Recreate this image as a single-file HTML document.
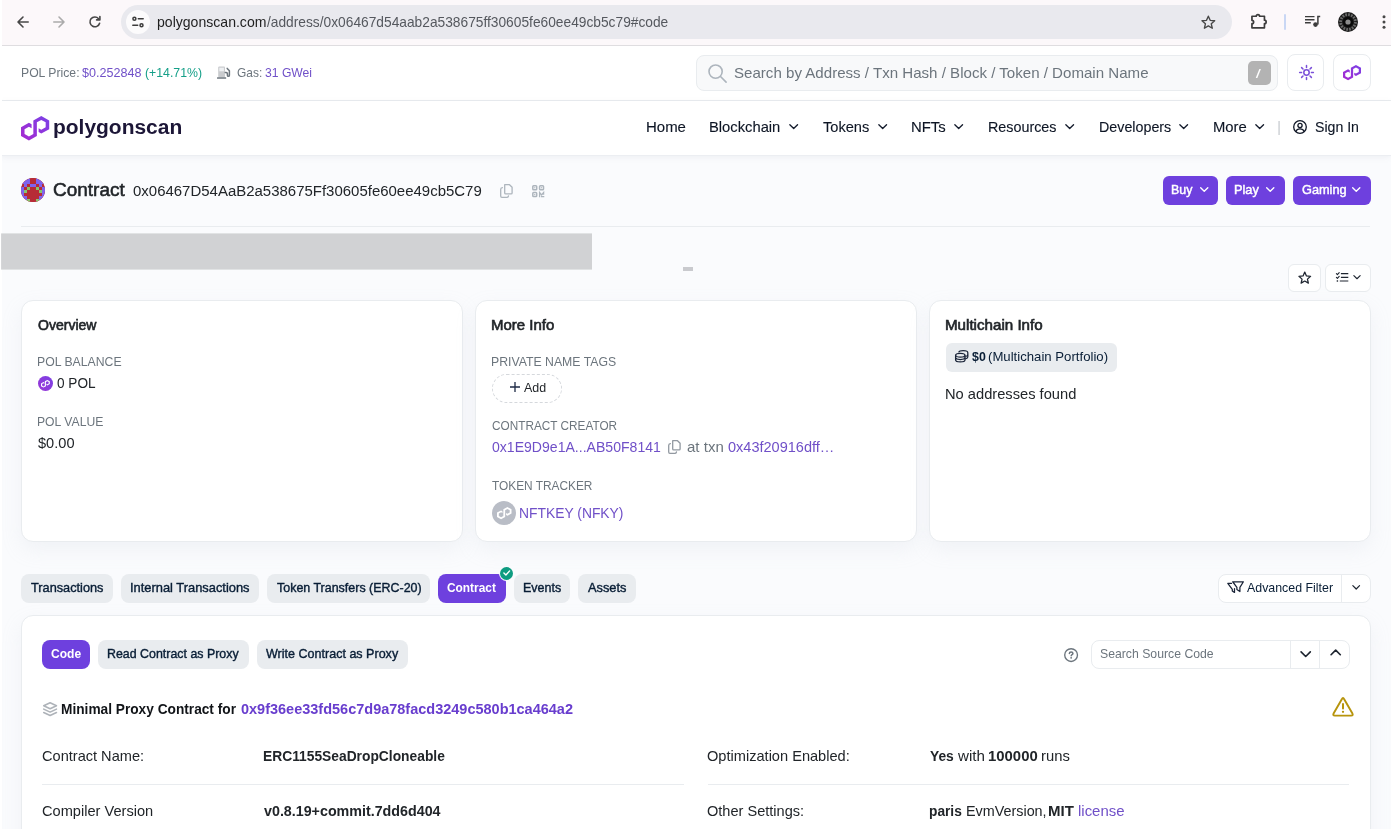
<!DOCTYPE html>
<html lang="en">
<head>
<meta charset="utf-8">
<title>ERC1155SeaDropCloneable | Address 0x06467D54AaB2a538675Ff30605fe60ee49cb5C79 | PolygonScan</title>
<style>
html,body{margin:0;padding:0;background:#fff;}
body{width:1391px;height:829px;overflow:hidden;font-family:"Liberation Sans",Arial,sans-serif;}
#root{will-change:transform;position:relative;width:1391px;height:829px;overflow:hidden;background:#fafbfd;}
.t{position:absolute;white-space:nowrap;line-height:1;transform-origin:0 0;margin:0;padding:0;}
.b{position:absolute;box-sizing:border-box;}
.card{background:#fff;border:1px solid #e9ecef;border-radius:12px;box-shadow:0 8px 20px rgba(189,197,209,.15);}
.pill{background:#e9ecef;border-radius:8px;}
.pp{background:#6e40de;border-radius:8px;}
.wb{background:#fff;border:1px solid #e9ecef;border-radius:8px;}
svg{position:absolute;overflow:visible;}
b{font-weight:700;}
</style>
</head>
<body>
<div id="root">
<!-- browser chrome -->
<div class="b" style="left:0;top:0;width:1391px;height:45px;background:#fcf8fa;"></div>
<div class="b" style="left:0;top:45px;width:1391px;height:1px;background:#dfdde0;"></div>
<div class="b" style="left:121px;top:5px;width:1111px;height:34px;border-radius:17px;background:#e9e9ee;"></div>
<div class="b" style="left:126px;top:10px;width:24px;height:24px;border-radius:12px;background:#fcfbfc;"></div>
<!-- site top bar -->
<div class="b" style="left:0;top:46px;width:1391px;height:54px;background:#fff;"></div>
<div class="b" style="left:0;top:100px;width:1391px;height:1px;background:#e9ecef;"></div>
<div class="b" style="left:696px;top:55px;width:582px;height:36px;border-radius:8px;background:#f8f9fa;border:1px solid #e9ecef;"></div>
<div class="b" style="left:1248px;top:61px;width:23px;height:24px;border-radius:5px;background:#b3b3b3;"></div>
<div class="b wb" style="left:1287px;top:54px;width:37px;height:37px;"></div>
<div class="b wb" style="left:1333px;top:54px;width:38px;height:37px;"></div>
<!-- navbar -->
<div class="b" style="left:0;top:101px;width:1391px;height:54px;background:#fff;box-shadow:0 2px 6px rgba(140,152,164,.12);"></div>
<div class="b" style="left:0;top:155px;width:1391px;height:1px;background:#eceef2;"></div>
<!-- title row -->
<div class="b" style="left:21px;top:178px;width:24px;height:24px;border-radius:12px;background:#a93040;overflow:hidden;"></div>
<div class="b pp" style="left:1163px;top:176px;width:55px;height:29px;border-radius:6px;"></div>
<div class="b pp" style="left:1226px;top:176px;width:59px;height:29px;border-radius:6px;"></div>
<div class="b pp" style="left:1293px;top:176px;width:78px;height:29px;border-radius:6px;"></div>
<div class="b" style="left:21px;top:226px;width:1349px;height:1px;background:#e9ecef;"></div>
<!-- gray ad placeholder -->
<div class="b" style="left:683.4px;top:267.4px;width:10px;height:3.3px;background:#c9cace;"></div>
<div class="b wb" style="left:1287.5px;top:264px;width:33px;height:28px;border-radius:6px;"></div>
<div class="b wb" style="left:1325px;top:264px;width:46px;height:28px;border-radius:6px;"></div>
<!-- cards -->
<div class="b card" style="left:21px;top:300px;width:442px;height:242px;"></div>
<div class="b card" style="left:475px;top:300px;width:442px;height:242px;"></div>
<div class="b card" style="left:929px;top:300px;width:442px;height:242px;"></div>
<div class="b" style="left:37.9px;top:376.2px;width:15px;height:15px;border-radius:8px;background:linear-gradient(45deg,#9a36d6,#7b41e4);"></div>
<div class="b" style="left:492px;top:374px;width:70px;height:28.5px;border-radius:15px;border:1px dashed #d5d8dc;"></div>
<div class="b" style="left:492px;top:501px;width:24px;height:24px;border-radius:12px;background:#b9bdc6;"></div>
<div class="b" style="left:946px;top:343px;width:171px;height:28.5px;border-radius:6px;background:#e9ecef;"></div>
<!-- tabs -->
<div class="b pill" style="left:21px;top:574px;width:91.5px;height:28.5px;"></div>
<div class="b pill" style="left:121px;top:574px;width:137.5px;height:28.5px;"></div>
<div class="b pill" style="left:267px;top:574px;width:163px;height:28.5px;"></div>
<div class="b pp" style="left:438px;top:574px;width:68px;height:28.5px;"></div>
<div class="b pill" style="left:514px;top:574px;width:55.5px;height:28.5px;"></div>
<div class="b pill" style="left:578px;top:574px;width:57.5px;height:28.5px;"></div>
<div class="b" style="left:499.5px;top:566.5px;width:13.5px;height:13.5px;border-radius:7px;background:#0e9c81;box-shadow:0 0 0 1px #fafbfd;"></div>
<div class="b wb" style="left:1218px;top:574px;width:152.5px;height:28.5px;"></div>
<div class="b" style="left:1341px;top:574px;width:1px;height:28.5px;background:#e9ecef;"></div>
<!-- code card -->
<div class="b card" style="left:21px;top:615px;width:1350px;height:300px;"></div>
<div class="b pp" style="left:42px;top:640px;width:48px;height:28.5px;"></div>
<div class="b pill" style="left:98px;top:640px;width:151px;height:28.5px;"></div>
<div class="b pill" style="left:257px;top:640px;width:151px;height:28.5px;"></div>
<div class="b wb" style="left:1091px;top:640px;width:258.5px;height:28.5px;"></div>
<div class="b" style="left:1290px;top:640px;width:1px;height:28.5px;background:#e9ecef;"></div>
<div class="b" style="left:1319px;top:640px;width:1px;height:28.5px;background:#e9ecef;"></div>
<div class="b" style="left:42px;top:784px;width:642px;height:1px;background:#e9ecef;"></div>
<div class="b" style="left:708px;top:784px;width:641px;height:1px;background:#e9ecef;"></div>
<!-- left window edge -->
<div class="b" style="left:0;top:0;width:2px;height:829px;background:#fff;"></div>
<svg style="left:0;top:230px" width="600" height="44" viewBox="0 0 600 44"><rect x="1.1" y="3.4" width="590.9" height="36.2" fill="#d1d2d4"/></svg>
<!-- ===== icons ===== -->
<svg width="0" height="0" style="left:0;top:0"><defs>
<linearGradient id="pg" x1="0" y1="1" x2="1" y2="0"><stop offset="0" stop-color="#a729d0"/><stop offset="1" stop-color="#7a41e6"/></linearGradient>
<clipPath id="bc"><circle cx="12" cy="12" r="12"/></clipPath>
</defs></svg>
<!-- chrome: back / forward / reload -->
<svg style="left:17px;top:16px" width="12" height="12" viewBox="0 0 12 12" fill="none" stroke="#474747" stroke-width="1.6" stroke-linecap="round" stroke-linejoin="round"><path d="M11.2 6H1.2M6 1L1 6l5 5"/></svg>
<svg style="left:53px;top:16px" width="12" height="12" viewBox="0 0 12 12" fill="none" stroke="#ababab" stroke-width="1.6" stroke-linecap="round" stroke-linejoin="round"><path d="M.8 6h10M6 1l5 5-5 5"/></svg>
<svg style="left:89px;top:16px" width="12" height="12" viewBox="0 0 12 12" fill="none" stroke="#474747" stroke-width="1.6" stroke-linecap="round" stroke-linejoin="round"><path d="M10.6 7.2A4.9 4.9 0 1 1 9.6 2.7"/><path d="M10.9.6v3.3H7.6" /></svg>
<!-- tune / site info icon -->
<svg style="left:132px;top:16px" width="12" height="12" viewBox="0 0 12 12" fill="none" stroke="#3c3c3c" stroke-width="1.5" stroke-linecap="round"><circle cx="2.4" cy="2.7" r="1.5"/><path d="M6.3 2.7h4.9"/><circle cx="9.5" cy="9.2" r="1.5"/><path d="M.8 9.2h4.9"/></svg>
<!-- bookmark star -->
<svg style="left:1200.7px;top:14.9px" width="14.7" height="13.8" viewBox="0 0 16 15" fill="none" stroke="#474747" stroke-width="1.5" stroke-linejoin="round"><path d="M8 1.3l2 4.5 4.9.5-3.7 3.3 1.1 4.8L8 11.9l-4.3 2.5 1.1-4.8L1.100 6.3 6 5.800z"/></svg>
<!-- extension puzzle -->
<svg style="left:1250px;top:13px" width="18" height="17" viewBox="0 0 18 17" fill="none" stroke="#3c3c3c" stroke-width="1.7" stroke-linejoin="round"><path d="M1.950 3.250H6.200a1.700 1.700 0 0 1 3.400 0H14.450V7.200a1.700 1.700 0 0 1 0 3.400V14.850H1.950V10.700a1.700 1.700 0 0 0 0-3.400z"/></svg>
<div class="b" style="left:1284px;top:14px;width:2px;height:16px;background:#c9d7f4;border-radius:1px;"></div>
<!-- media control -->
<svg style="left:1305px;top:15px" width="16" height="13" viewBox="0 0 16 13" fill="none" stroke="#3c3c3c" stroke-width="1.4"><path d="M0 1.600h9.500M0 4.700h9.500M0 7.800h5.800"/><path d="M12.900 9.600V1.400h2.300" stroke-width="1.500"/><circle cx="10.500" cy="9.600" r="2.300" fill="#3c3c3c" stroke="none"/></svg>
<!-- avatar -->
<svg style="left:1338px;top:12px" width="20" height="20" viewBox="0 0 20 20"><circle cx="10" cy="10" r="10" fill="#1c1c1c"/><circle cx="10" cy="10" r="7.400" fill="none" stroke="#6a6a6a" stroke-width="2.800" stroke-dasharray="1.700 1.200"/><circle cx="10" cy="10" r="5.200" fill="#0a0a0a"/><circle cx="10" cy="10" r="2.600" fill="#8c8c8c"/></svg>
<!-- menu dots -->
<svg style="left:1382px;top:15px" width="4" height="14" viewBox="0 0 4 14" fill="#474747"><circle cx="2" cy="1.700" r="1.500"/><circle cx="2" cy="7" r="1.500"/><circle cx="2" cy="12.300" r="1.500"/></svg>
<!-- gas pump -->
<svg style="left:217px;top:65.500px" width="14" height="13" viewBox="0 0 14 13"><rect x="1.200" y=".5" width="6.800" height="10.800" rx="1" fill="#c9cbce"/><rect x="2.300" y="1.700" width="4.600" height="3.600" fill="#eef0f2"/><rect x="0" y="11.200" width="9.200" height="1.600" rx=".5" fill="#6c757d"/><path d="M8.300 6.600h.9c.8 0 1.200.5 1.200 1.200v1.400c0 .7.500 1.100 1 1.100s1-.4 1-1.100V4.700L10.200 2.400" fill="none" stroke="#6c757d" stroke-width="1.500" stroke-linecap="round" stroke-linejoin="round"/></svg>
<!-- search magnifier -->
<svg style="left:708px;top:63.500px" width="19" height="19" viewBox="0 0 19 19" fill="none" stroke="#adb5bd" stroke-width="1.600" stroke-linecap="round"><circle cx="7.600" cy="7.600" r="6.600"/><path d="M12.500 12.500l5.600 5.600"/></svg>
<!-- sun -->
<svg style="left:1298.500px;top:65px" width="15" height="15" viewBox="0 0 15 15" fill="none" stroke="#7a4fd8" stroke-width="1.500" stroke-linecap="round"><circle cx="7.500" cy="7.500" r="2.700"/><path d="M7.500.6v2M7.500 12.400v2M.6 7.500h2M12.400 7.500h2M2.600 2.600l1.400 1.400M11 11l1.400 1.400M2.600 12.400L4 11M11 4l1.400-1.400"/></svg>
<!-- polygon small (top bar) -->
<svg style="left:1343px;top:65px" width="18" height="15.300" viewBox="0 0 178 161" preserveAspectRatio="none"><path fill="url(#pg)" d="M66.800 54.700l-16.700-9.700L0 74.100v58l50.100 29 50.100-29V41.900L128 25.800l27.800 16.100v32.200L128 90.200l-16.700-9.700v25.800l16.700 9.700 50.100-29V29L128 0 77.900 29v90.200l-27.800 16.100-27.800-16.100V86.900l27.800-16.100 16.700 9.700V54.700z"/></svg>
<!-- polygon logo (navbar) -->
<svg style="left:21px;top:115.700px" width="28.200" height="24.400" viewBox="0 0 178 161" preserveAspectRatio="none"><path fill="url(#pg)" d="M66.800 54.700l-16.700-9.700L0 74.100v58l50.100 29 50.100-29V41.900L128 25.800l27.800 16.100v32.200L128 90.200l-16.700-9.700v25.800l16.700 9.700 50.100-29V29L128 0 77.900 29v90.200l-27.800 16.100-27.800-16.100V86.900l27.800-16.100 16.700 9.700V54.700z"/></svg>
<!-- nav chevrons -->
<svg style="left:788.75px;top:123.700px" width="9.400" height="5.500" viewBox="0 0 10 6" fill="none" stroke="#141c2c" stroke-width="1.450" stroke-linecap="round" stroke-linejoin="round"><path d="M.8.800L5 5 9.200.8"/></svg>
<svg style="left:878.05px;top:123.700px" width="9.400" height="5.500" viewBox="0 0 10 6" fill="none" stroke="#141c2c" stroke-width="1.450" stroke-linecap="round" stroke-linejoin="round"><path d="M.8.800L5 5 9.200.8"/></svg>
<svg style="left:954.30px;top:123.700px" width="9.400" height="5.500" viewBox="0 0 10 6" fill="none" stroke="#141c2c" stroke-width="1.450" stroke-linecap="round" stroke-linejoin="round"><path d="M.8.800L5 5 9.200.8"/></svg>
<svg style="left:1065.05px;top:123.700px" width="9.400" height="5.500" viewBox="0 0 10 6" fill="none" stroke="#141c2c" stroke-width="1.450" stroke-linecap="round" stroke-linejoin="round"><path d="M.8.800L5 5 9.200.8"/></svg>
<svg style="left:1179.00px;top:123.700px" width="9.400" height="5.500" viewBox="0 0 10 6" fill="none" stroke="#141c2c" stroke-width="1.450" stroke-linecap="round" stroke-linejoin="round"><path d="M.8.800L5 5 9.200.8"/></svg>
<svg style="left:1255.45px;top:123.700px" width="9.400" height="5.500" viewBox="0 0 10 6" fill="none" stroke="#141c2c" stroke-width="1.450" stroke-linecap="round" stroke-linejoin="round"><path d="M.8.800L5 5 9.200.8"/></svg>
<!-- user circle -->
<svg style="left:1293px;top:120px" width="14" height="14" viewBox="0 0 14 14" fill="none" stroke="#111827" stroke-width="1.300"><circle cx="7" cy="7" r="6.300"/><circle cx="7" cy="5.500" r="2.100"/><path d="M2.900 11.600c.6-1.900 2.100-2.800 4.100-2.800s3.500.9 4.100 2.800"/></svg>
<!-- blockie -->
<svg style="left:21px;top:178px" width="24" height="24" viewBox="0 0 24 24" shape-rendering="crispEdges"><g clip-path="url(#bc)">
<rect width="24" height="24" fill="#b72b36"/>
<g fill="#7f63ee"><rect x="0" y="0" width="9" height="6"/><rect x="15" y="0" width="9" height="6"/><rect x="3" y="6" width="3" height="3"/><rect x="18" y="6" width="3" height="3"/><rect x="9" y="6" width="6" height="3"/><rect x="0" y="9" width="3" height="9"/><rect x="21" y="9" width="3" height="9"/><rect x="0" y="18" width="6" height="6"/><rect x="18" y="18" width="6" height="6"/></g>
<g fill="#86c46c"><rect x="6" y="9" width="3" height="3"/><rect x="15" y="9" width="3" height="3"/><rect x="3" y="12" width="3" height="3"/><rect x="18" y="12" width="3" height="3"/><rect x="6" y="21" width="3" height="3"/><rect x="15" y="21" width="3" height="3"/></g>
</g></svg>
<!-- copy + qr (title) -->
<svg style="left:500px;top:184px" width="13" height="14" viewBox="0 0 13 14" fill="none" stroke="#adb5bd" stroke-width="1.300" stroke-linejoin="round" stroke-linecap="round"><path d="M4.700.7h4.800l2.600 2.600v5.600a1 1 0 0 1-1 1H5.700a1 1 0 0 1-1-1z"/><path d="M2.400 3.700C1.300 3.900.7 4.500.7 5.400v6.700c0 .7.500 1.200 1.200 1.200h5.200c.8 0 1.300-.5 1.400-1.400"/></svg>
<svg style="left:532px;top:184.500px" width="12.500" height="12.500" viewBox="0 0 12.500 12.500" fill="none" stroke="#adb5bd" stroke-width="1.500"><rect x=".8" y=".8" width="3.900" height="3.900" rx=".8"/><rect x="7.600" y=".8" width="3.900" height="3.900" rx=".8"/><rect x=".8" y="7.600" width="3.900" height="3.900" rx=".8"/><g fill="#adb5bd" stroke="none"><rect x="2.200" y="2.200" width="1.100" height="1.100"/><rect x="9" y="2.200" width="1.100" height="1.100"/><rect x="2.200" y="9" width="1.100" height="1.100"/></g><path d="M7.600 12.300V7.500l2 2.500 2-2.500v2.200M9 11.700h3.300" stroke-width="1.300"/></svg>
<!-- button chevrons (Buy/Play/Gaming) -->
<svg style="left:1199.800px;top:186.600px" width="8.500" height="5.200" viewBox="0 0 10 6" fill="none" stroke="#fff" stroke-width="1.600" stroke-linecap="round" stroke-linejoin="round"><path d="M.8.800L5 5 9.200.8"/></svg>
<svg style="left:1266.300px;top:186.600px" width="8.500" height="5.200" viewBox="0 0 10 6" fill="none" stroke="#fff" stroke-width="1.600" stroke-linecap="round" stroke-linejoin="round"><path d="M.8.800L5 5 9.200.8"/></svg>
<svg style="left:1351.800px;top:186.600px" width="8.500" height="5.200" viewBox="0 0 10 6" fill="none" stroke="#fff" stroke-width="1.600" stroke-linecap="round" stroke-linejoin="round"><path d="M.8.800L5 5 9.200.8"/></svg>
<!-- star + list buttons -->
<svg style="left:1297.500px;top:271px" width="13.500" height="12.700" viewBox="0 0 16 15" fill="none" stroke="#1e2530" stroke-width="1.500" stroke-linejoin="round"><path d="M8 1.300l2 4.500 4.900.5-3.700 3.300 1.100 4.800L8 11.900l-4.300 2.500 1.100-4.800L1.100 6.300 6 5.800z"/></svg>
<svg style="left:1335.500px;top:271.500px" width="12.500" height="10.500" viewBox="0 0 12.500 10.500" fill="none" stroke="#1e2530" stroke-width="1.200"><path d="M4.900 1.600h7.400M4.900 5.300h7.400M3.800 9h8.500"/><path d="M.4 1.700l1 1L3.200.7M.4 5.400l1 1 1.800-2" stroke-linecap="round" stroke-linejoin="round" stroke-width="1.100"/><rect x=".7" y="8.300" width="1.400" height="1.400" fill="#1e2530" stroke="none"/></svg>
<svg style="left:1353px;top:275.200px" width="8" height="4.500" viewBox="0 0 10 6" fill="none" stroke="#1e2530" stroke-width="1.500" stroke-linecap="round" stroke-linejoin="round"><path d="M.8.800L5 5 9.200.8"/></svg>
<!-- POL coin icon -->
<svg style="left:41px;top:380px" width="8.800" height="7.600" viewBox="0 0 178 161" preserveAspectRatio="none"><path fill="#fff" d="M66.800 54.700l-16.700-9.700L0 74.100v58l50.100 29 50.100-29V41.900L128 25.800l27.800 16.100v32.200L128 90.200l-16.700-9.700v25.800l16.700 9.700 50.100-29V29L128 0 77.900 29v90.200l-27.800 16.100-27.800-16.100V86.900l27.800-16.100 16.700 9.700V54.700z"/></svg>
<!-- plus -->
<svg style="left:509.600px;top:382px" width="10" height="10" viewBox="0 0 10 10" fill="none" stroke="#1e2a45" stroke-width="1.300"><path d="M5 0v10M0 5h10"/></svg>
<!-- copy (creator) -->
<svg style="left:668px;top:440px" width="13" height="14" viewBox="0 0 13 14" fill="none" stroke="#9299a1" stroke-width="1.300" stroke-linejoin="round" stroke-linecap="round"><path d="M4.700.7h4.800l2.600 2.600v5.600a1 1 0 0 1-1 1H5.700a1 1 0 0 1-1-1z"/><path d="M2.400 3.700C1.300 3.900.7 4.500.7 5.400v6.700c0 .7.500 1.200 1.200 1.200h5.200c.8 0 1.300-.5 1.400-1.400"/></svg>
<!-- token icon -->
<svg style="left:496.700px;top:507.200px" width="14.500" height="12.200" viewBox="0 0 178 161" preserveAspectRatio="none"><path fill="#fff" d="M66.800 54.700l-16.700-9.700L0 74.100v58l50.100 29 50.100-29V41.900L128 25.800l27.800 16.100v32.200L128 90.200l-16.700-9.700v25.800l16.700 9.700 50.100-29V29L128 0 77.900 29v90.200l-27.800 16.100-27.800-16.100V86.900l27.800-16.100 16.700 9.700V54.700z"/></svg>
<!-- coins -->
<svg style="left:955px;top:349.500px" width="13.500" height="12.500" viewBox="0 0 13.500 12.500" fill="none" stroke="#1a2438" stroke-width="1.250"><path d="M3.600 2.400C4 1.300 5.800.6 8.200.6c2.600 0 4.600.9 4.600 2.100v4.200c0 .9-1 1.600-2.500 1.900"/><path d="M12.800 4.700c0 .8-.9 1.500-2.400 1.800" /><ellipse cx="5.300" cy="5.200" rx="4.700" ry="1.900"/><path d="M.6 5.200v4.700c0 1.100 2.100 1.900 4.700 1.900s4.700-.8 4.700-1.900V5.200"/><path d="M.6 7.600c0 1.100 2.100 1.900 4.700 1.900s4.700-.8 4.700-1.900"/></svg>
<!-- verified check -->
<svg style="left:502.700px;top:570px" width="7.500" height="6" viewBox="0 0 7.500 6" fill="none" stroke="#fff" stroke-width="1.400" stroke-linecap="round" stroke-linejoin="round"><path d="M.9 3.100l2 1.900L6.600.9"/></svg>
<!-- filters icon -->
<svg style="left:1227px;top:581px" width="17" height="12" viewBox="0 0 17 12" fill="none" stroke="#1a2438" stroke-width="1.250" stroke-linejoin="round" stroke-linecap="round"><path d="M5.700.75H16.400L12.900 6.300V10.500L9.900 8.500V6.300z"/><path d="M4.500 2.400H.8L5.300 8.300V9.900L7.500 11.400V7.600"/></svg>
<svg style="left:1352px;top:585.300px" width="8.400" height="4.800" viewBox="0 0 10 6" fill="none" stroke="#1e2530" stroke-width="1.500" stroke-linecap="round" stroke-linejoin="round"><path d="M.8.800L5 5 9.200.8"/></svg>
<!-- help -->
<svg style="left:1064.400px;top:647.800px" width="14.200" height="14.200" viewBox="0 0 14 14" fill="none" stroke="#6c757d" stroke-width="1.350"><circle cx="7" cy="7" r="6.300"/><path d="M5.300 5.500c0-1 .7-1.600 1.750-1.600s1.750.6 1.750 1.450c0 1.150-1.700 1.150-1.700 2.350" stroke-linecap="round" stroke-width="1.500"/><circle cx="7.050" cy="9.700" r=".9" fill="#6c757d" stroke="none"/></svg>
<!-- search chevrons -->
<svg style="left:1299.800px;top:650.800px" width="11.400" height="6.600" viewBox="0 0 10 6" fill="none" stroke="#1e2530" stroke-width="1.500" stroke-linecap="round" stroke-linejoin="round"><path d="M.8.800L5 5 9.200.8"/></svg>
<svg style="left:1329.600px;top:649px" width="11.400" height="6.600" viewBox="0 0 10 6" fill="none" stroke="#1e2530" stroke-width="1.500" stroke-linecap="round" stroke-linejoin="round"><path d="M.8 5.200L5 1l4.200 4.200"/></svg>
<!-- layers -->
<svg style="left:42.800px;top:701.800px" width="14.200" height="14.200" viewBox="0 0 14.200 14.200" fill="none" stroke="#aeb3b9" stroke-width="1.550" stroke-linejoin="round" stroke-linecap="round"><path d="M7.100.7l6.400 3-6.400 3-6.400-3z"/><path d="M.7 7.100l6.400 3 6.400-3"/><path d="M.7 10.500l6.400 3 6.400-3"/></svg>
<!-- warning -->
<svg style="left:1332px;top:697px" width="22" height="19.6" viewBox="0 0 22 19.6" fill="none" stroke="#b7940c" stroke-width="1.9" stroke-linejoin="round" stroke-linecap="round"><path d="M9.800 2.300Q11 -.2 12.200 2.300L20.300 16.300Q21.600 18.650 19.100 18.650H2.900Q.4 18.650 1.700 16.300z"/><path d="M11 7.100v4.500" stroke-width="2"/><circle cx="11" cy="14.800" r="1.150" fill="#b7940c" stroke="none"/></svg>
<div class="t" style="left:157.19px;top:14.01px;font-size:15px;color:#1f1f1f;transform:scaleX(0.9374);">polygonscan.com</div>
<div class="t" style="left:266.71px;top:14.01px;font-size:15px;color:#55585e;transform:scaleX(0.9169);">/address/0x06467d54aab2a538675ff30605fe60ee49cb5c79#code</div>
<div class="t" style="left:20.67px;top:67.01px;font-size:12.6px;color:#6c757d;transform:scaleX(0.9685);">POL Price:</div>
<div class="t" style="left:82.24px;top:67.01px;font-size:12.6px;color:#7050c8;transform:scaleX(0.9976);">$0.252848</div>
<div class="t" style="left:144.72px;top:67.01px;font-size:12.6px;color:#149f88;transform:scaleX(0.9763);">(+14.71%)</div>
<div class="t" style="left:237.00px;top:67.01px;font-size:12.6px;color:#6c757d;transform:scaleX(0.9472);">Gas:</div>
<div class="t" style="left:265.08px;top:67.01px;font-size:12.6px;color:#7050c8;transform:scaleX(0.9644);">31 GWei</div>
<div class="t" style="left:733.76px;top:65.01px;font-size:15px;color:#6c757d;transform:scaleX(1.0058);">Search by Address / Txn Hash / Block / Token / Domain Name</div>
<div class="t" style="left:1256.30px;top:68.01px;font-size:12.5px;color:#fff;font-weight:700;font-style:italic;">/</div>
<div class="t" style="left:52.98px;top:117.01px;font-size:20px;color:#1c1637;font-weight:700;transform:scaleX(1.0475);">polygonscan</div>
<div class="t" style="left:646.18px;top:119.01px;font-size:15px;color:#0d1524;transform:scaleX(0.9976);-webkit-text-stroke:0.12px #0d1524;">Home</div>
<div class="t" style="left:709.18px;top:119.01px;font-size:15px;color:#0d1524;transform:scaleX(0.9831);-webkit-text-stroke:0.12px #0d1524;">Blockchain</div>
<div class="t" style="left:823.16px;top:119.01px;font-size:15px;color:#0d1524;transform:scaleX(0.9735);-webkit-text-stroke:0.12px #0d1524;">Tokens</div>
<div class="t" style="left:910.95px;top:119.01px;font-size:15px;color:#0d1524;transform:scaleX(0.9928);-webkit-text-stroke:0.12px #0d1524;">NFTs</div>
<div class="t" style="left:988.28px;top:119.01px;font-size:15px;color:#0d1524;transform:scaleX(0.9556);-webkit-text-stroke:0.12px #0d1524;">Resources</div>
<div class="t" style="left:1098.77px;top:119.01px;font-size:15px;color:#0d1524;transform:scaleX(0.9524);-webkit-text-stroke:0.12px #0d1524;">Developers</div>
<div class="t" style="left:1212.78px;top:119.01px;font-size:15px;color:#0d1524;transform:scaleX(0.9878);-webkit-text-stroke:0.12px #0d1524;">More</div>
<div class="t" style="left:1277.30px;top:120.01px;font-size:14px;color:#c4c8cd;">|</div>
<div class="t" style="left:1314.55px;top:119.01px;font-size:15px;color:#0d1524;transform:scaleX(0.9416);-webkit-text-stroke:0.12px #0d1524;">Sign In</div>
<div class="t" style="left:53.01px;top:180.00px;font-size:19.2px;color:#212529;transform:scaleX(0.9895);-webkit-text-stroke:0.55px #212529;">Contract</div>
<div class="t" style="left:132.56px;top:183.00px;font-size:15.5px;color:#212529;transform:scaleX(0.9658);">0x06467D54AaB2a538675Ff30605fe60ee49cb5C79</div>
<div class="t" style="left:1171.10px;top:184.01px;font-size:12.6px;color:#fff;transform:scaleX(0.9849);-webkit-text-stroke:0.45px #fff;">Buy</div>
<div class="t" style="left:1234.38px;top:184.01px;font-size:12.6px;color:#fff;transform:scaleX(1.0113);-webkit-text-stroke:0.45px #fff;">Play</div>
<div class="t" style="left:1301.61px;top:184.01px;font-size:12.6px;color:#fff;transform:scaleX(1.0113);-webkit-text-stroke:0.45px #fff;">Gaming</div>
<div class="t" style="left:38.10px;top:318.01px;font-size:14.2px;color:#212529;transform:scaleX(0.9896);-webkit-text-stroke:0.6px #212529;">Overview</div>
<div class="t" style="left:37.49px;top:356.01px;font-size:12.6px;color:#6c757d;transform:scaleX(0.9717);">POL BALANCE</div>
<div class="t" style="left:57.35px;top:376.01px;font-size:14.5px;color:#212529;transform:scaleX(0.9380);">0 POL</div>
<div class="t" style="left:37.48px;top:416.01px;font-size:12.6px;color:#6c757d;transform:scaleX(0.9667);">POL VALUE</div>
<div class="t" style="left:37.72px;top:436.01px;font-size:14.5px;color:#212529;transform:scaleX(1.0067);">$0.00</div>
<div class="t" style="left:490.88px;top:318.01px;font-size:14.2px;color:#212529;transform:scaleX(1.0561);-webkit-text-stroke:0.6px #212529;">More Info</div>
<div class="t" style="left:490.97px;top:356.01px;font-size:12.6px;color:#6c757d;transform:scaleX(0.9737);">PRIVATE NAME TAGS</div>
<div class="t" style="left:523.75px;top:382.01px;font-size:12.6px;color:#212529;transform:scaleX(0.9886);">Add</div>
<div class="t" style="left:492.07px;top:420.01px;font-size:12.6px;color:#6c757d;transform:scaleX(0.9361);">CONTRACT CREATOR</div>
<div class="t" style="left:492.31px;top:440.01px;font-size:14.5px;color:#7050c8;transform:scaleX(0.9698);">0x1E9D9e1A...AB50F8141</div>
<div class="t" style="left:687.41px;top:440.01px;font-size:14.5px;color:#6c757d;transform:scaleX(1.0366);">at txn</div>
<div class="t" style="left:727.89px;top:440.01px;font-size:14.5px;color:#7050c8;transform:scaleX(1.0015);">0x43f20916dff…</div>
<div class="t" style="left:492.20px;top:480.01px;font-size:12.6px;color:#6c757d;transform:scaleX(0.9420);">TOKEN TRACKER</div>
<div class="t" style="left:518.51px;top:506.01px;font-size:14.5px;color:#7050c8;transform:scaleX(0.9559);">NFTKEY (NFKY)</div>
<div class="t" style="left:945.31px;top:318.01px;font-size:14.2px;color:#212529;transform:scaleX(1.0673);-webkit-text-stroke:0.6px #212529;">Multichain Info</div>
<div class="t" style="left:972.00px;top:351.01px;font-size:12.6px;color:#081d35;font-weight:700;transform:scaleX(0.9821);">$0</div>
<div class="t" style="left:988.05px;top:351.01px;font-size:12.6px;color:#081d35;transform:scaleX(1.0458);">(Multichain Portfolio)</div>
<div class="t" style="left:945.05px;top:387.01px;font-size:14.5px;color:#212529;transform:scaleX(1.0116);">No addresses found</div>
<div class="t" style="left:30.71px;top:582.01px;font-size:12.6px;color:#081d35;transform:scaleX(1.0116);-webkit-text-stroke:0.38px #081d35;">Transactions</div>
<div class="t" style="left:129.67px;top:582.01px;font-size:12.6px;color:#081d35;transform:scaleX(1.0225);-webkit-text-stroke:0.38px #081d35;">Internal Transactions</div>
<div class="t" style="left:276.89px;top:582.01px;font-size:12.6px;color:#081d35;transform:scaleX(0.9890);-webkit-text-stroke:0.38px #081d35;">Token Transfers (ERC-20)</div>
<div class="t" style="left:447.47px;top:582.01px;font-size:12.6px;color:#fff;font-weight:700;transform:scaleX(0.9440);">Contract</div>
<div class="t" style="left:522.67px;top:582.01px;font-size:12.6px;color:#081d35;transform:scaleX(0.9930);-webkit-text-stroke:0.38px #081d35;">Events</div>
<div class="t" style="left:587.68px;top:582.01px;font-size:12.6px;color:#081d35;transform:scaleX(1.0173);-webkit-text-stroke:0.38px #081d35;">Assets</div>
<div class="t" style="left:1247.01px;top:582.01px;font-size:12.6px;color:#081d35;transform:scaleX(0.9833);">Advanced Filter</div>
<div class="t" style="left:51.18px;top:648.01px;font-size:12.6px;color:#fff;font-weight:700;transform:scaleX(0.9560);">Code</div>
<div class="t" style="left:107.35px;top:648.01px;font-size:12.6px;color:#081d35;transform:scaleX(0.9844);-webkit-text-stroke:0.38px #081d35;">Read Contract as Proxy</div>
<div class="t" style="left:266.15px;top:648.01px;font-size:12.6px;color:#081d35;transform:scaleX(0.9956);-webkit-text-stroke:0.38px #081d35;">Write Contract as Proxy</div>
<div class="t" style="left:1099.78px;top:648.01px;font-size:12.6px;color:#6c757d;transform:scaleX(0.9722);">Search Source Code</div>
<div class="t" style="left:60.99px;top:702.01px;font-size:14.5px;color:#111418;font-weight:700;transform:scaleX(0.9443);">Minimal Proxy Contract for</div>
<div class="t" style="left:240.52px;top:702.01px;font-size:14.5px;color:#683dce;font-weight:700;transform:scaleX(0.9994);">0x9f36ee33fd56c7d9a78facd3249c580b1ca464a2</div>
<div class="t" style="left:41.92px;top:749.01px;font-size:14.5px;color:#212529;transform:scaleX(1.0050);">Contract Name:</div>
<div class="t" style="left:263.19px;top:749.01px;font-size:14.5px;color:#212529;font-weight:700;transform:scaleX(0.9520);">ERC1155SeaDropCloneable</div>
<div class="t" style="left:707.12px;top:749.01px;font-size:14.5px;color:#212529;transform:scaleX(1.0064);">Optimization Enabled:</div>
<div class="t" style="left:930.29px;top:749.01px;font-size:14.5px;color:#212529;font-weight:700;transform:scaleX(0.9521);">Yes</div>
<div class="t" style="left:957.77px;top:749.01px;font-size:14.5px;color:#212529;transform:scaleX(1.0462);">with</div>
<div class="t" style="left:988.40px;top:749.01px;font-size:14.5px;color:#212529;font-weight:700;transform:scaleX(1.0273);">100000</div>
<div class="t" style="left:1041.36px;top:749.01px;font-size:14.5px;color:#212529;transform:scaleX(1.0211);">runs</div>
<div class="t" style="left:41.75px;top:804.01px;font-size:14.5px;color:#212529;transform:scaleX(1.0075);">Compiler Version</div>
<div class="t" style="left:263.81px;top:804.01px;font-size:14.5px;color:#212529;font-weight:700;transform:scaleX(0.9843);">v0.8.19+commit.7dd6d404</div>
<div class="t" style="left:707.13px;top:804.01px;font-size:14.5px;color:#212529;transform:scaleX(1.0039);">Other Settings:</div>
<div class="t" style="left:929.18px;top:804.01px;font-size:14.5px;color:#212529;font-weight:700;transform:scaleX(0.9459);">paris</div>
<div class="t" style="left:965.76px;top:804.01px;font-size:14.5px;color:#212529;transform:scaleX(0.9902);">EvmVersion,</div>
<div class="t" style="left:1048.42px;top:804.01px;font-size:14.5px;color:#212529;font-weight:700;transform:scaleX(1.0328);">MIT</div>
<div class="t" style="left:1077.67px;top:804.01px;font-size:14.5px;color:#7050c8;transform:scaleX(1.0314);">license</div>
</div>
</body>
</html>
